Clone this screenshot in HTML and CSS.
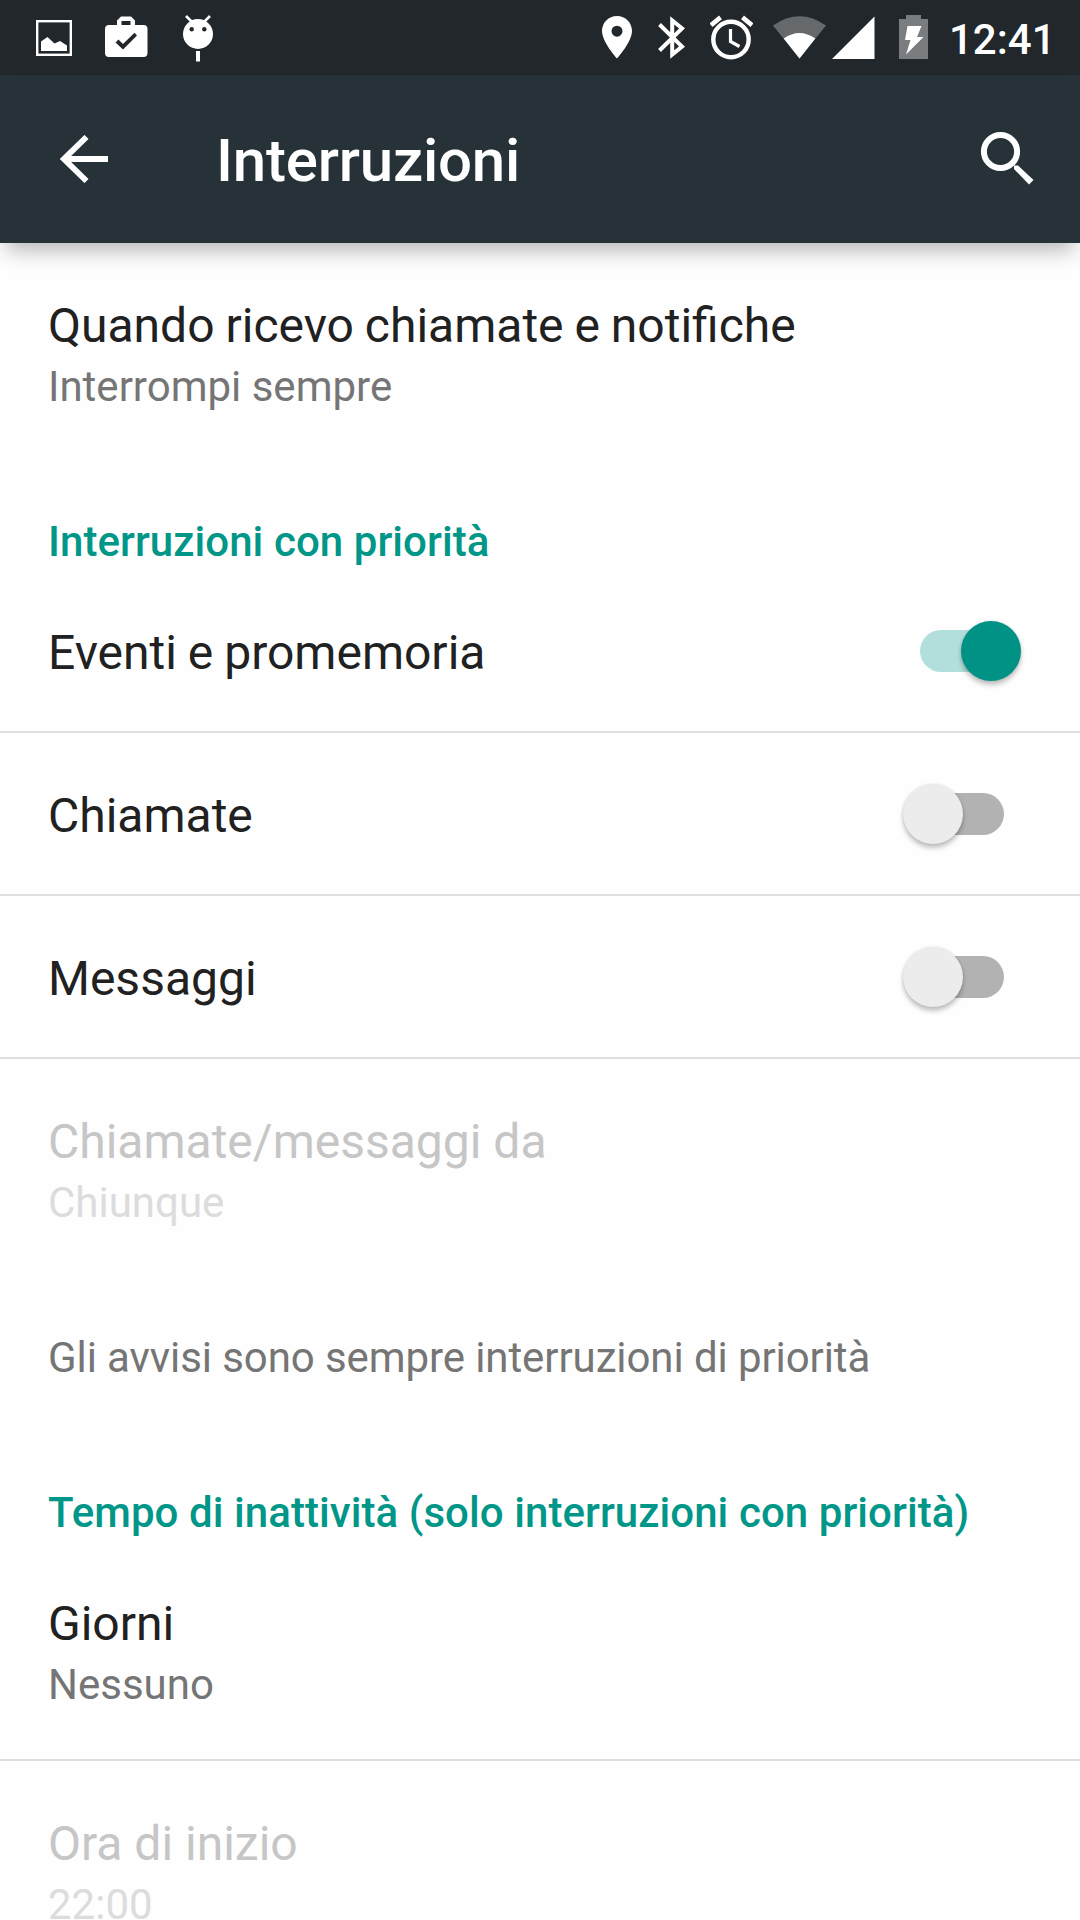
FILE: index.html
```html
<!DOCTYPE html>
<html lang="it">
<head>
<meta charset="utf-8">
<title>Interruzioni</title>
<link rel="stylesheet" href="styles.css">
</head>
<body>
<div class="screen">
  <div class="status-bar">
    <div class="notifications">
      <svg width="36" height="75" viewBox="36 0 36 75"><rect x="37.2" y="21.2" width="33.6" height="33.6" fill="none" stroke="#fff" stroke-width="2.4"/><path d="M41 51V41.500l6.500-4.500 7 6.500 5.500-2.500 7 4.500V51z" fill="#fff"/></svg>
      <svg class="briefcase" width="43" height="75" viewBox="105 0 43 75"><path fill="#fff" fill-rule="evenodd" d="M117 25v-4.500l4-4h10l4 4V25h8.500a4 4 0 0 1 4 4v24a4 4 0 0 1-4 4H109a4 4 0 0 1-4-4V29a4 4 0 0 1 4-4zM121.500 21v4h9v-4zM115.500 42.500l7.500 7 14-14-2.500-2.700-11.500 11.200-4.500-4.500z"/></svg>
      <svg class="android" width="30" height="75" viewBox="183 0 30 75"><path d="M186 16l6 6M210 16l-6 6" stroke="#fff" stroke-width="2.600"/><circle cx="198" cy="34" r="15" fill="#fff"/><circle cx="191.700" cy="29.300" r="2.200" fill="#21272b"/><circle cx="204.300" cy="29.300" r="2.200" fill="#21272b"/><path d="M196 51h4v10.500h-4z" fill="#fff"/></svg>
    </div>
    <div class="system">
      <svg class="pin" width="30" height="75" viewBox="602 0 30 75"><path fill="#fff" fill-rule="evenodd" d="M617 16c-8.500 0-15 6.700-15 15 0 11 15 27.500 15 27.500S632 42 632 31c0-8.300-6.500-15-15-15zm0 9.700a5.500 5.500 0 1 1 0 11 5.500 5.500 0 0 1 0-11z"/></svg>
      <svg class="bluetooth" width="28" height="75" viewBox="658 0 28 75"><path d="M659.500 24.500L682 46.500 672.200 54.500V20.500L682 28.300 659.500 50.500" fill="none" stroke="#fff" stroke-width="4"/></svg>
      <svg class="alarm" width="43" height="75" viewBox="710 0 43 75"><circle cx="731" cy="39.500" r="17.700" fill="none" stroke="#fff" stroke-width="4.400"/><path d="M730.500 29v12.500l9 5" fill="none" stroke="#fff" stroke-width="3.200"/><path d="M711 25.200l9.500-7.800M752 25.200l-9.500-7.800" stroke="#fff" stroke-width="4.600"/></svg>
      <svg class="wifi" width="54" height="75" viewBox="773 0 54 75"><path d="M773 25.500Q799.500 7 826 25.500L799.500 58.500z" fill="#65696c"/><path d="M783.700 38.500Q799.500 27.500 815.300 38.500L799.500 58.500z" fill="#fff"/></svg>
      <svg class="signal" width="43" height="75" viewBox="831.500 0 43 75"><path d="M831.500 59L874 16.500V59z" fill="#fff"/></svg>
      <svg class="battery" width="29" height="75" viewBox="899 0 29 75"><path d="M899 19h7v-4h15v4h7v40h-29z" fill="#7a7d80"/><path d="M907.500 26h14l-4.500 11h6.500L906 54.500l4.500-14.500H905z" fill="#fff"/></svg>
      <span class="clock">12:41</span>
    </div>
  </div>
  <header class="app-bar">
    <svg class="back" width="48" height="48" viewBox="60 135 48 48"><path d="M86.500 137L64 159l22.500 22M64 159h44" fill="none" stroke="#fff" stroke-width="5.800"/></svg>
    <h1 class="title">Interruzioni</h1>
    <svg width="54" height="54" viewBox="980 131 54 54"><circle cx="1000.500" cy="151.500" r="16.600" fill="none" stroke="#fff" stroke-width="6"/><path d="M1014 165.500h4l15.500 14.500-4.500 4.500L1014 169z" fill="#fff"/></svg>
  </header>
  <main class="settings">
    <div class="row"><div class="label">Quando ricevo chiamate e notifiche<div class="summary">Interrompi sempre</div></div></div>
    <h2 class="category">Interruzioni con priorità</h2>
    <div class="row toggle divided"><div class="label">Eventi e promemoria</div><div class="switch on"><span class="thumb"></span></div></div>
    <div class="row toggle divided"><div class="label">Chiamate</div><div class="switch"><span class="thumb"></span></div></div>
    <div class="row toggle divided"><div class="label">Messaggi</div><div class="switch"><span class="thumb"></span></div></div>
    <div class="row disabled"><div class="label">Chiamate/messaggi da<div class="summary">Chiunque</div></div></div>
    <p class="note">Gli avvisi sono sempre interruzioni di priorità</p>
    <h2 class="category">Tempo di inattività (solo interruzioni con priorità)</h2>
    <div class="row divided"><div class="label">Giorni<div class="summary">Nessuno</div></div></div>
    <div class="row disabled"><div class="label">Ora di inizio<div class="summary">22:00</div></div></div>
  </main>
</div>
</body>
</html>
```
FILE: styles.css
```css
* { box-sizing: border-box; }
body { margin: 0; background: #fefefe; font-family: Roboto, sans-serif; color: #212121; }
svg { display: block; flex: none; }
.screen { height: 1920px; overflow: hidden; display: flex; flex-direction: column; }

.status-bar { flex: none; height: 75px; background: #21272b; display: flex; justify-content: space-between; padding: 0 29px 0 36px; }
.notifications { display: flex; }
.briefcase { margin-left: 33px; }
.android { margin-left: 35px; }
.system { display: flex; }
.bluetooth { margin-left: 26px; }
.alarm { margin-left: 24px; }
.wifi { margin-left: 20px; }
.signal { margin-left: 5px; }
.battery { margin-left: 24px; }
.clock { margin-left: 21px; width: 102px; color: #fff; font-size: 42px; font-weight: 500; line-height: 79px; white-space: nowrap; }

.app-bar { flex: none; height: 168px; background: #263238; display: flex; align-items: flex-start; padding: 56px 46px 0 60px; box-shadow: 0 14px 20px -6px rgba(0, 0, 0, .27); }
.back { margin-top: 4px; }
.title { flex: 1; margin: -5px 0 0 108px; color: #fff; font-size: 60px; font-weight: 500; line-height: 70px; letter-spacing: -.2px; }

.settings { display: flex; flex-direction: column; }
.row { flex: none; display: flex; padding: 51px 0 45px 48px; }
.toggle { padding-bottom: 46px; }
.divided { border-bottom: 2px solid #dfdfdf; }
.label { flex: 1; font-size: 48px; line-height: 64px; word-spacing: -1px; }
.summary { font-size: 42px; line-height: 58px; word-spacing: 0; color: #757575; }
.disabled .label { color: #c6c6c6; word-spacing: 0; }
.disabled .summary { color: #dcdcdc; }
.category { flex: none; margin: 0; height: 109px; padding: 56px 48px 0; font-size: 42px; font-weight: 500; line-height: 50px; letter-spacing: .07px; color: #009688; white-space: nowrap; }
.note { flex: none; margin: 0; height: 155px; padding: 56px 48px 0; font-size: 42px; line-height: 50px; letter-spacing: -.09px; color: #757575; white-space: nowrap; }

.switch { width: 84px; height: 42px; margin: 9px 76px 0 0; border-radius: 21px; background: #b2b2b2; }
.thumb { display: block; width: 60px; height: 60px; margin: -9.5px 0 0 -17.5px; border-radius: 50%; background: #ececec; box-shadow: 0 4px 5px rgba(0, 0, 0, .24), 0 0 3px rgba(0, 0, 0, .1); }
.on { background: #b2dfdb; }
.on .thumb { background: #009385; margin-left: 41.4px; }
```
